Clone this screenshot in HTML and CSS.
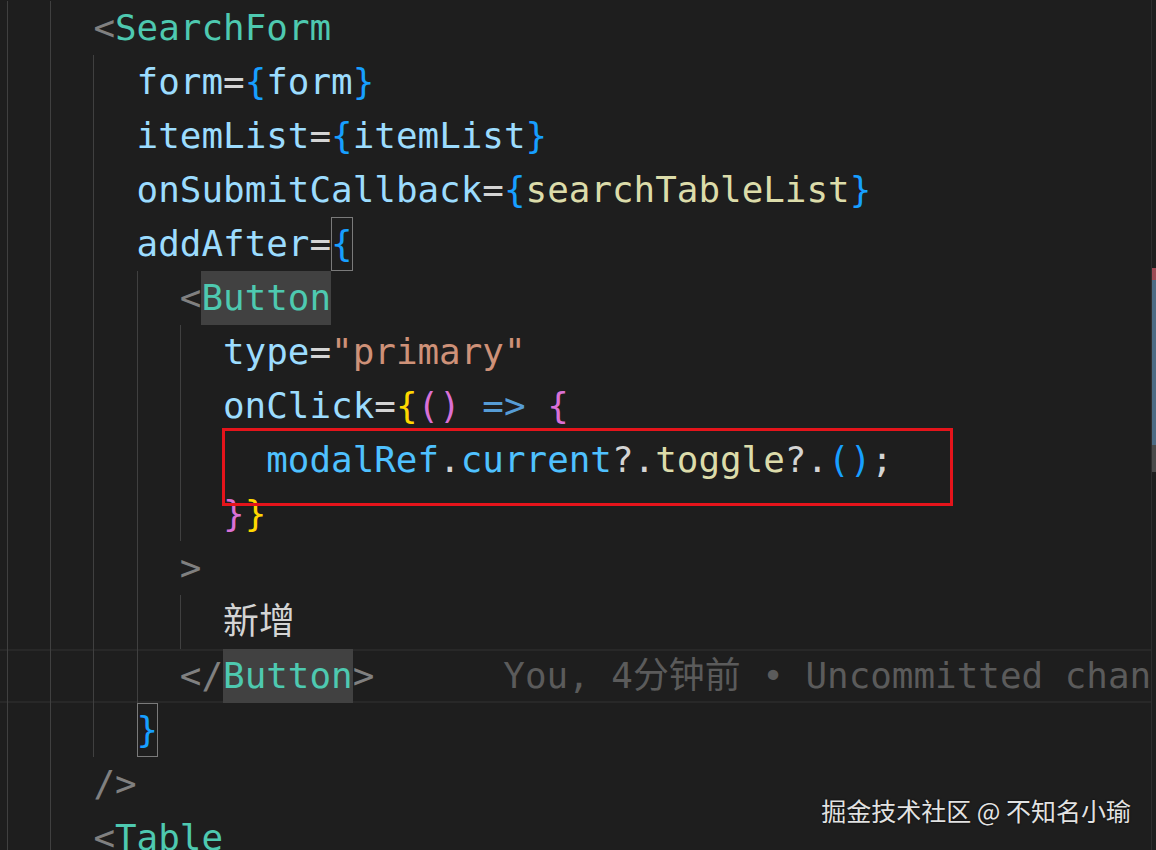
FILE: index.html
```html
<!DOCTYPE html>
<html lang="en">
<head>
    <meta charset="UTF-8">
    <meta name="viewport" content="width=device-width, initial-scale=1.0">
    <title>SearchForm.tsx</title>
    <link rel="stylesheet" href="styles.css">
</head>
<body>

<div class="editor">
    <div class="code">
        <div class="line"><span class="ind"></span><span class="ind"></span><span class="pun">&lt;</span><span class="tag">SearchForm</span></div>
        <div class="line"><span class="ind"></span><span class="ind"></span><span class="ind"></span><span class="attr">form</span><span class="op">=</span><span class="b3">{</span><span class="attr">form</span><span class="b3">}</span></div>
        <div class="line"><span class="ind"></span><span class="ind"></span><span class="ind"></span><span class="attr">itemList</span><span class="op">=</span><span class="b3">{</span><span class="attr">itemList</span><span class="b3">}</span></div>
        <div class="line"><span class="ind"></span><span class="ind"></span><span class="ind"></span><span class="attr">onSubmitCallback</span><span class="op">=</span><span class="b3">{</span><span class="fn">searchTableList</span><span class="b3">}</span></div>
        <div class="line"><span class="ind"></span><span class="ind"></span><span class="ind"></span><span class="attr">addAfter</span><span class="op">=</span><span class="b3 match">{</span></div>
        <div class="line"><span class="ind"></span><span class="ind"></span><span class="ind"></span><span class="ind"></span><span class="pun">&lt;</span><span class="tag hl">Button</span></div>
        <div class="line"><span class="ind"></span><span class="ind"></span><span class="ind"></span><span class="ind"></span><span class="ind"></span><span class="attr">type</span><span class="op">=</span><span class="str">"primary"</span></div>
        <div class="line"><span class="ind"></span><span class="ind"></span><span class="ind"></span><span class="ind"></span><span class="ind"></span><span class="attr">onClick</span><span class="op">=</span><span class="b1">{</span><span class="b2">()</span> <span class="kw">=&gt;</span> <span class="b2">{</span></div>
        <div class="line"><span class="ind"></span><span class="ind"></span><span class="ind"></span><span class="ind"></span><span class="ind"></span><span class="ind"></span><span class="var">modalRef</span><span class="op">.</span><span class="var">current</span><span class="op">?.</span><span class="fn">toggle</span><span class="op">?.</span><span class="b3">()</span><span class="op">;</span></div>
        <div class="line"><span class="ind"></span><span class="ind"></span><span class="ind"></span><span class="ind"></span><span class="ind"></span><span class="b2">}</span><span class="b1">}</span></div>
        <div class="line"><span class="ind"></span><span class="ind"></span><span class="ind"></span><span class="ind"></span><span class="pun">&gt;</span></div>
        <div class="line"><span class="ind"></span><span class="ind"></span><span class="ind"></span><span class="ind"></span><span class="ind"></span><span class="txt">新增</span></div>
        <div class="line current"><span class="ind"></span><span class="ind"></span><span class="ind"></span><span class="ind"></span><span class="pun">&lt;/</span><span class="tag hl">Button</span><span class="pun">&gt;</span><span class="blame">You, 4分钟前 • Uncommitted changes</span></div>
        <div class="line"><span class="ind"></span><span class="ind"></span><span class="ind"></span><span class="b3 match">}</span></div>
        <div class="line"><span class="ind"></span><span class="ind"></span><span class="pun">/&gt;</span></div>
        <div class="line"><span class="ind"></span><span class="ind"></span><span class="pun">&lt;</span><span class="tag">Table</span></div>
    </div>

    <!-- annotation box drawn over the code -->
    <div class="mark-box"></div>

    <div class="ruler">
        <div class="ruler-slider"></div>
        <div class="ruler-red"></div>
        <div class="ruler-blue"></div>
    </div>

    <div class="watermark">掘金技术社区 @ 不知名小瑜</div>
</div>

</body>
</html>
```

FILE: styles.css
```css
body {
    margin: 0;
    padding: 0;
    background-color: #1e1e1e;
}

.editor {
    position: relative;
    width: 1156px;
    height: 850px;
    overflow: hidden;
    background-color: #1e1e1e;
}

.code {
    padding-top: 1px;
    padding-left: 7px;
    font-family: "DejaVu Sans Mono", "Noto Sans CJK SC", monospace;
    font-size: 35.9px;
    color: #d4d4d4;
}

.line {
    height: 54px;
    line-height: 54px;
    white-space: pre;
}

.line.current {
    box-shadow: inset 0 2px #282828, inset 0 -2px #282828;
    width: 1156px;
    margin-left: -7px;
    padding-left: 7px;
}

/* indent guides */
.ind {
    display: inline-block;
    width: 2ch;
    height: 54px;
    vertical-align: top;
    box-shadow: inset 1px 0 #404040;
}

.pun { color: #808080; }
.tag { color: #4ec9b0; }
.attr { color: #9cdcfe; }
.op { color: #d4d4d4; }
.fn { color: #dcdcaa; }
.str { color: #ce9178; }
.kw { color: #569cd6; }
.var { color: #4fc1ff; }
.txt { color: #d4d4d4; }

/* bracket pair colours */
.b1 { color: #ffd700; }
.b2 { color: #da70d6; }
.b3 { color: #179fff; }

.hl {
    display: inline-block;
    height: 54px;
    vertical-align: top;
    background-color: #414141;
}

.match {
    display: inline-block;
    height: 54px;
    vertical-align: top;
    outline: 1px solid #7a7a7a;
    outline-offset: -1px;
}

.blame {
    margin-left: 129px;
    color: #5b5b5b;
}

.mark-box {
    position: absolute;
    left: 222px;
    top: 428px;
    width: 731px;
    height: 78px;
    box-sizing: border-box;
    border: 3px solid #e5141b;
}

.ruler {
    position: absolute;
    top: 0;
    right: 0;
    bottom: 0;
    width: 4px;
    border-left: 1px solid #2e2e2e;
    background-color: #1f1f1f;
}

.ruler-slider {
    position: absolute;
    left: 0;
    right: 0;
    top: 268px;
    height: 204px;
    background-color: #4a4a4a;
}

.ruler-red {
    position: absolute;
    left: 0;
    right: 0;
    top: 268px;
    height: 12px;
    background-color: #9c4a55;
}

.ruler-blue {
    position: absolute;
    left: 0;
    right: 0;
    top: 280px;
    height: 165px;
    background-color: #4c6b84;
}

.watermark {
    position: absolute;
    right: 25px;
    bottom: 22px;
    font-family: "Noto Sans CJK SC", sans-serif;
    font-size: 25px;
    color: #e2e2e2;
    text-shadow: 0 0 2px #000;
}
```
